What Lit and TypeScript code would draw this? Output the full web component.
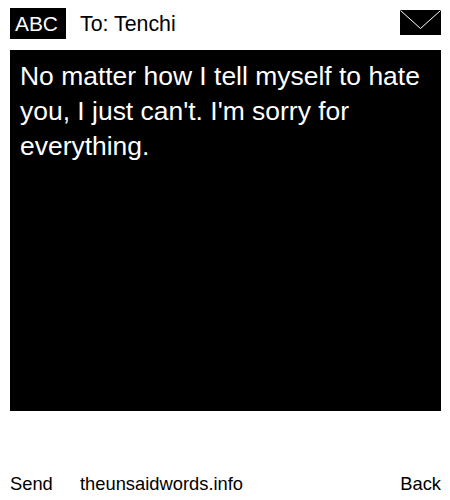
import { LitElement, html, css } from "lit";
import { customElement } from "lit/decorators.js";

@customElement("app-root")
export class AppRoot extends LitElement {
  static styles = css`
    :host {
      display: block;
      width: 450px;
      height: 500px;
      background: #fff;
      color: #000;
      font-family: "Liberation Sans", Arial, sans-serif;
      box-sizing: border-box;
      padding: 8px 9px 0 10px;
    }
    .top {
      display: flex;
      align-items: center;
      height: 31px;
      margin-bottom: 11px;
    }
    .abc {
      background: #000;
      color: #fff;
      font-size: 20.9px;
      line-height: 31px;
      height: 31px;
      width: 56px;
      box-sizing: border-box;
      padding-left: 5px;
    }
    .to {
      font-size: 21.33px;
      line-height: 30px;
      margin-left: 14px;
      flex: 1;
    }
    .env {
      display: block;
      width: 41px;
      height: 25px;
      margin-top: -3px;
    }
    .msg {
      background: #000;
      color: #fff;
      height: 361px;
      box-sizing: border-box;
      padding: 9px 10px;
      font-size: 26.46px;
      line-height: 35px;
    }
    .bottom {
      display: flex;
      font-size: 18.33px;
      line-height: 22px;
      margin-top: 62px;
    }
    .send { width: 70px; }
    .site { flex: 1; }
  `;

  render() {
    return html`
      <div class="top">
        <div class="abc">ABC</div>
        <div class="to">To: Tenchi</div>
        <svg class="env" viewBox="0 0 41 25" aria-hidden="true">
          <rect width="41" height="25" fill="#000"></rect>
          <path d="M0.5 0.5 L20.5 18.5 L40.5 0.5" fill="none" stroke="#fff" stroke-width="1"></path>
        </svg>
      </div>
      <div class="msg">No matter how I tell myself to hate you, I just can't. I'm sorry for everything.</div>
      <div class="bottom">
        <div class="send">Send</div>
        <div class="site">theunsaidwords.info</div>
        <div>Back</div>
      </div>
    `;
  }
}
